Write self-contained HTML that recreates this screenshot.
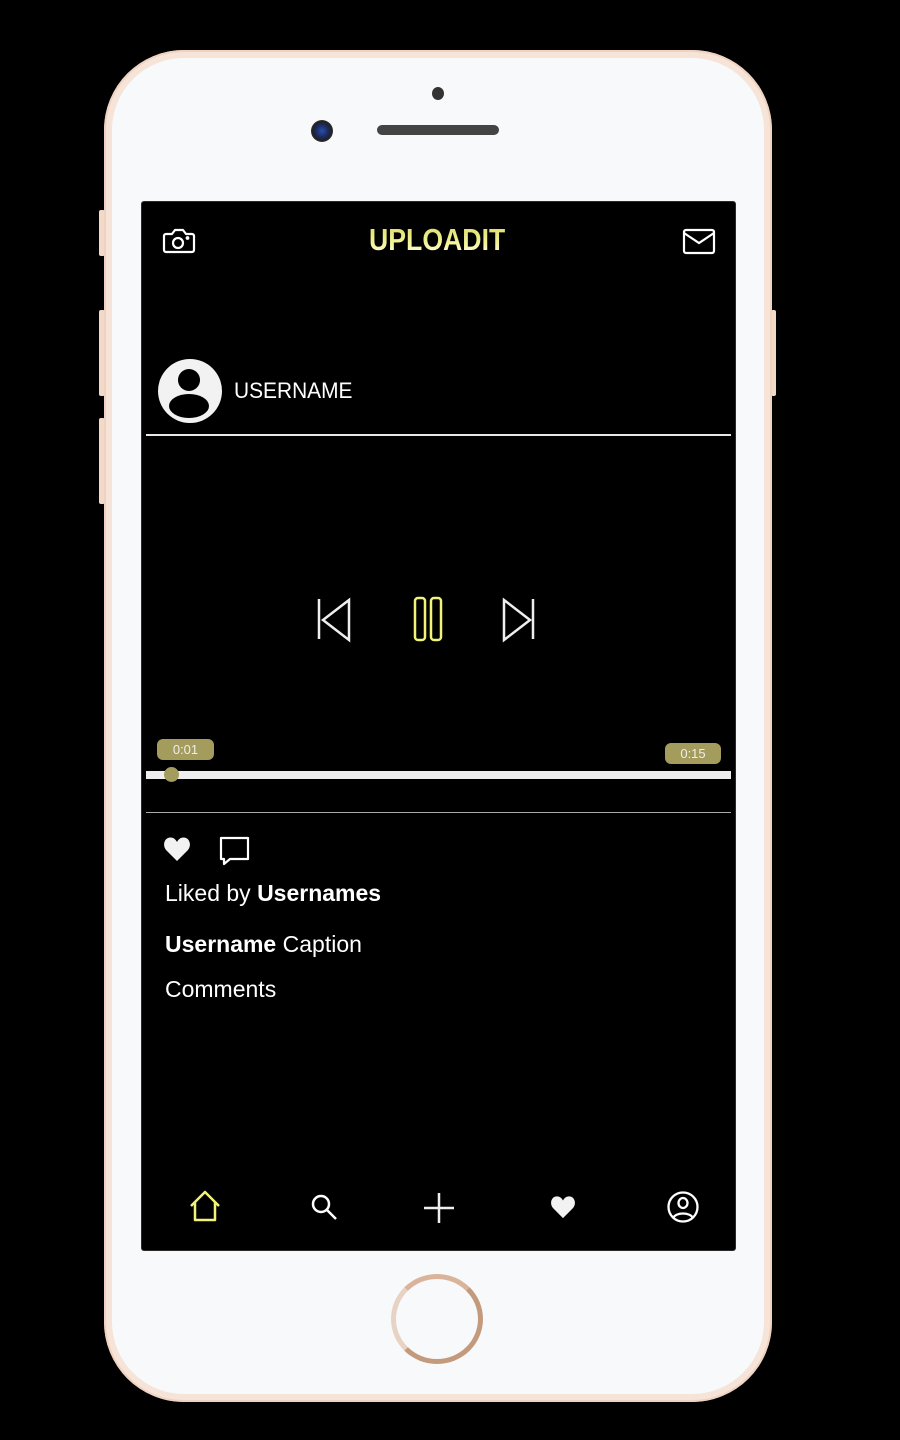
<!DOCTYPE html>
<html><head><meta charset="utf-8"><style>
*{margin:0;padding:0;box-sizing:border-box}
body{width:900px;height:1440px;background:#000;position:relative;overflow:hidden;font-family:"Liberation Sans",sans-serif}
.btn{position:absolute;background:#f2d9c8;border-radius:2px}
.phone{position:absolute;left:104px;top:50px;width:668px;height:1352px;border-radius:80px;background:#f7e4d8;box-shadow:inset 0 0 0 2px #f0d2c0}
.inner{position:absolute;left:8px;top:8px;right:8px;bottom:8px;border-radius:72px;background:#f8f9fb}
.screen{position:absolute;left:141px;top:201px;width:595px;height:1050px;background:#000;border-radius:3px;border:1px solid #2a2a2a}
.a{position:absolute}
.t{color:#fff;position:absolute;white-space:nowrap}
</style></head><body>
<div class="btn" style="left:99px;top:210px;width:6px;height:46px"></div>
<div class="btn" style="left:99px;top:310px;width:6px;height:86px"></div>
<div class="btn" style="left:99px;top:418px;width:6px;height:86px"></div>
<div class="btn" style="left:771px;top:310px;width:5px;height:86px"></div>
<div class="phone"><div class="inner"></div></div>
<div class="a" style="left:432px;top:87px;width:12px;height:13px;border-radius:50%;background:#333"></div>
<div class="a" style="left:377px;top:125px;width:122px;height:10px;border-radius:5px;background:#444"></div>
<div class="a" style="left:311px;top:120px;width:22px;height:22px;border-radius:50%;background:radial-gradient(circle,#2a4fa8 0,#1a2a60 40%,#222 60%,#555 100%)"></div>
<div class="a" style="left:391px;top:1274px;width:92px;height:90px;border-radius:50%;border:5px solid #c49a7c;border-top-color:#d9b49a;border-left-color:#e8d2c4"></div>
<div class="screen"></div>
<!-- top bar -->
<svg class="a" style="left:162px;top:227px" width="34" height="28" viewBox="0 0 34 28" fill="none" stroke="#fff" stroke-width="2.2"><path d="M4 7h6l3-4h8l3 4h6a2 2 0 0 1 2 2v14a2 2 0 0 1-2 2H4a2 2 0 0 1-2-2V9a2 2 0 0 1 2-2z" stroke-linejoin="round"/><circle cx="16" cy="16" r="5"/><circle cx="25.5" cy="11" r="0.8" fill="#fff"/></svg>
<div class="a" style="left:369px;top:222px;font:bold 31px 'Liberation Sans',sans-serif;letter-spacing:0px;background:linear-gradient(#d8d860,#f4f49a 60%,#fff);-webkit-background-clip:text;color:transparent;transform:scaleX(0.86);transform-origin:left">UPLOADIT</div>
<svg class="a" style="left:682px;top:228px" width="34" height="27" viewBox="0 0 34 27" fill="none" stroke="#fff" stroke-width="2.2"><rect x="2" y="2" width="30" height="23" rx="2"/><path d="M2 5l15 10 15-10"/></svg>
<!-- user -->
<div class="a" style="left:158px;top:359px;width:64px;height:64px;border-radius:50%;background:#f2f2f2;overflow:hidden">
<div class="a" style="left:20px;top:10px;width:22px;height:22px;border-radius:50%;background:#000"></div>
<div class="a" style="left:11px;top:35px;width:40px;height:24px;border-radius:50%;background:#000"></div></div>
<div class="t" style="left:234px;top:378px;font-size:22px;transform:scaleX(0.95);transform-origin:left">USERNAME</div>
<div class="a" style="left:146px;top:434px;width:585px;height:2px;background:#e8e8e8"></div>
<!-- player -->
<svg class="a" style="left:310px;top:595px" width="240" height="50" viewBox="0 0 240 50" fill="none" stroke-width="2.5">
<path d="M9 4v40M39 5L13 25l26 20z" stroke="#eee"/>
<rect x="105" y="3" width="10" height="42" rx="3" stroke="#f2f27a"/><rect x="121" y="3" width="10" height="42" rx="3" stroke="#f2f27a"/>
<path d="M223 4v40M194 5l26 20-26 20z" stroke="#eee"/></svg>
<div class="a" style="left:157px;top:739px;width:57px;height:21px;border-radius:6px;background:#a39c5d;color:#eee;font-size:13px;text-align:center;line-height:21px">0:01</div>
<div class="a" style="left:665px;top:743px;width:56px;height:21px;border-radius:6px;background:#a39c5d;color:#eee;font-size:13px;text-align:center;line-height:21px">0:15</div>
<div class="a" style="left:146px;top:771px;width:585px;height:8px;background:#eee"></div>
<div class="a" style="left:164px;top:767px;width:15px;height:15px;border-radius:50%;background:#a39c5d"></div>
<div class="a" style="left:146px;top:812px;width:585px;height:1px;background:#aaa"></div>
<!-- actions -->
<svg class="a" style="left:163px;top:836px" width="28" height="26" viewBox="0 0 28 26"><path d="M14 25L3.5 14.5C-1 10 1 1.5 7.5 1.5 11 1.5 13 4 14 6 15 4 17 1.5 20.5 1.5 27 1.5 29 10 24.5 14.5z" fill="#f2f2f2"/></svg>
<svg class="a" style="left:218px;top:836px" width="34" height="30" viewBox="0 0 34 30" fill="none" stroke="#fff" stroke-width="2.2"><path d="M3 2h27v21H12l-6 5v-5H3z" stroke-linejoin="round"/></svg>
<div class="t" style="left:165px;top:880px;font-size:23px">Liked by <b>Usernames</b></div>
<div class="t" style="left:165px;top:931px;font-size:23px"><b>Username</b> Caption</div>
<div class="t" style="left:165px;top:976px;font-size:23px">Comments</div>
<!-- nav -->
<svg class="a" style="left:188px;top:1190px" width="34" height="32" viewBox="0 0 34 32" fill="none" stroke="#f2f27a" stroke-width="2.5"><path d="M3 16L17 2l14 14M7 12v18h20V12" stroke-linejoin="round"/></svg>
<svg class="a" style="left:309px;top:1192px" width="30" height="30" viewBox="0 0 30 30" fill="none" stroke="#fff" stroke-width="2.5"><circle cx="12" cy="12" r="8"/><path d="M18 18l9 9"/></svg>
<svg class="a" style="left:422px;top:1192px" width="34" height="32" viewBox="0 0 34 32" fill="none" stroke="#eee" stroke-width="2.5"><path d="M17 1v30M2 16h30"/></svg>
<svg class="a" style="left:550px;top:1195px" width="26" height="24" viewBox="0 0 28 26"><path d="M14 25L3.5 14.5C-1 10 1 1.5 7.5 1.5 11 1.5 13 4 14 6 15 4 17 1.5 20.5 1.5 27 1.5 29 10 24.5 14.5z" fill="#f2f2f2"/></svg>
<svg class="a" style="left:666px;top:1190px" width="34" height="34" viewBox="0 0 34 34" fill="none" stroke="#fff" stroke-width="2.3"><circle cx="17" cy="17" r="14.5"/><ellipse cx="17" cy="13" rx="4.5" ry="5"/><path d="M7 28c3-6 17-6 20 0"/></svg>
</body></html>
